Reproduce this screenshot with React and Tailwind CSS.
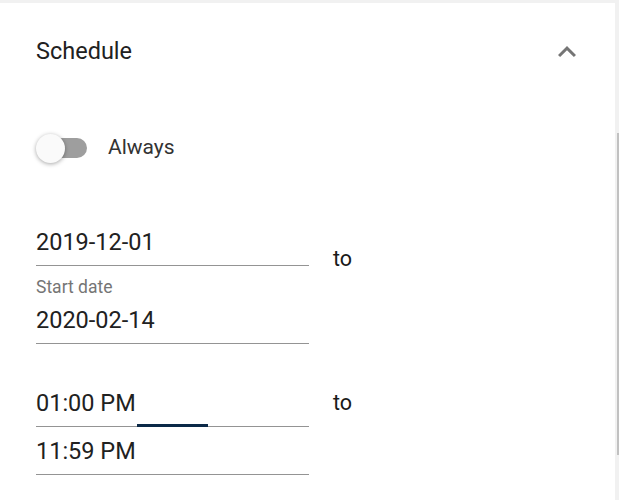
import React from 'react';

const Field = ({ label, value, focusBar }) => (
  <div className="flex flex-col w-[273px]">
    {label && (
      <div className="h-[20px] leading-[20px] text-[17.5px] text-[#757575] mb-[8px]">{label}</div>
    )}
    <div className="h-[30px] leading-[30px] text-[23.5px] text-[#212121]">{value}</div>
    <div className="relative h-[1px] bg-[#949494] mt-[8px]">
      {focusBar && (
        <div className="absolute left-[101px] top-[-2px] w-[71px] h-[3px] bg-[#0b2947]" />
      )}
    </div>
  </div>
);

const App = () => {
  return (
    <div className="w-[619px] h-[500px] flex bg-white overflow-hidden font-['Roboto',sans-serif]">
      <div className="flex-1 flex flex-col">
        <div className="h-[3px] bg-[#f1f1f1]" />

        {/* Header */}
        <div className="h-[98px] flex items-center justify-between pl-[36px] pr-[30px]">
          <span className="text-[23.5px] text-[#212121]">Schedule</span>
          <svg width="36" height="36" viewBox="0 0 24 24" fill="#757575">
            <path d="M12 8l-6 6 1.41 1.41L12 10.83l4.59 4.58L18 14z" />
          </svg>
        </div>

        {/* Always switch */}
        <div className="mt-[23px] h-[48px] flex items-center pl-[36px]">
          <div className="relative w-[51px] h-[29px] flex items-center">
            <div className="ml-[3px] w-[48px] h-[20px] rounded-full bg-[#9e9e9e]" />
            <div className="absolute left-0 top-0 w-[29px] h-[29px] rounded-full bg-[#fafafa] shadow-[0_1px_4px_rgba(0,0,0,0.35)]" />
          </div>
          <span className="ml-[21px] text-[21px] text-[#333333]">Always</span>
        </div>

        {/* Dates */}
        <div className="mt-[55px] flex items-start pl-[36px]">
          <div className="flex flex-col">
            <Field value="2019-12-01" />
            <div className="h-[11px]" />
            <Field label="Start date" value="2020-02-14" />
          </div>
          <span className="ml-[24px] mt-[17px] h-[30px] leading-[30px] text-[21.5px] text-[#1a1a1a]">to</span>
        </div>

        {/* Times */}
        <div className="mt-[44px] flex items-start pl-[36px]">
          <div className="flex flex-col">
            <Field value="01:00 PM" focusBar />
            <div className="h-[9px]" />
            <Field value="11:59 PM" />
          </div>
          <span className="ml-[24px] h-[30px] leading-[30px] text-[21.5px] text-[#1a1a1a]">to</span>
        </div>
      </div>

      {/* Scrollbar */}
      <div className="w-[4px] h-full bg-[#f1f1f1] flex flex-col pl-[2px] pt-[133px]">
        <div className="h-[322px] bg-[#c1c1c1]" />
      </div>
    </div>
  );
};

export default App;
